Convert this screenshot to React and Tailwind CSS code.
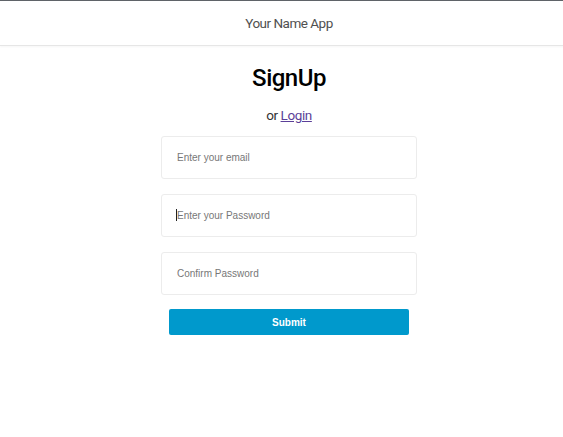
import { useState } from "react";

const Field = ({ type = "text", placeholder, caret }) => (
  <div className="relative">
    <input
      type={type}
      placeholder={placeholder}
      className="block w-full h-[43px] pl-[15px] pr-4 rounded-[3px] border border-[#ececec] bg-white text-[10px] text-[#333] placeholder:text-[#777] outline-none"
      style={{ fontFamily: '"Liberation Sans", Arial, sans-serif' }}
    />
    {caret && <span className="absolute left-[15px] top-[15px] h-[12px] w-px bg-[#222]" />}
  </div>
);

export default function App() {
  const [form] = useState(null);

  return (
    <div className="w-full min-h-[437px] overflow-hidden bg-white" style={{ fontFamily: "Roboto, sans-serif" }}>
      <div className="w-[578px]">
        <header className="h-[46px] border-t border-[#5f6368] border-b border-b-[#e6e6e6] shadow-[0_1px_2px_rgba(0,0,0,0.04)] flex items-center justify-center">
          <span className="text-[13.5px] tracking-[-0.5px] text-[#505050]">Your Name App</span>
        </header>

        <main className="flex flex-col items-center">
          <h1 className="mt-[16px] text-[24px] leading-[32px] tracking-[-0.5px] font-medium text-black">SignUp</h1>
          <p className="mt-[11px] text-[13.5px] leading-[20px] tracking-[-0.4px] text-[#333]">
            or <a href="#" className="underline text-[#5b3f98]">Login</a>
          </p>

          <form className="mt-[11px] w-[256px] flex flex-col gap-[15px]" onSubmit={(e) => e.preventDefault()}>
            <Field type="email" placeholder="Enter your email" />
            <Field type="password" placeholder="Enter your Password" caret />
            <Field type="password" placeholder="Confirm Password" />
            <button
              type="submit"
              className="mx-auto -mt-px w-[240px] h-[26px] rounded-[2px] bg-[#0099cc] text-white text-[10px] font-bold"
              style={{ fontFamily: '"Liberation Sans", Arial, sans-serif' }}
            >
              Submit
            </button>
          </form>
        </main>
      </div>
    </div>
  );
}
